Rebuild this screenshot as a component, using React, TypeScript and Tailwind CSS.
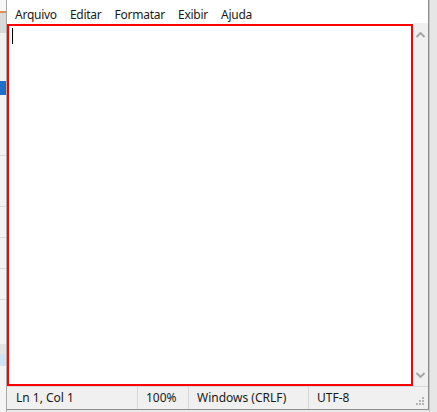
import React from "react";

const font = { fontFamily: '"Noto Sans", "Open Sans", sans-serif' };

function Grip() {
  const dots = [
    [6, 0],
    [3, 3],
    [6, 3],
    [0, 6],
    [3, 6],
    [6, 6],
  ];
  return (
    <svg width="9" height="9" viewBox="0 0 9 9" className="absolute right-[3px] bottom-[3px]">
      {dots.map(([x, y], i) => (
        <rect key={i} x={x} y={y} width="2" height="2" fill="#b4b4b4" />
      ))}
    </svg>
  );
}

function Chevron({ up }: { up: boolean }) {
  return (
    <svg width="9" height="6" viewBox="0 0 9 6">
      <path
        d={up ? "M0.5 5 L4.5 1 L8.5 5" : "M0.5 1 L4.5 5 L8.5 1"}
        fill="none"
        stroke="#a6a6a6"
        strokeWidth="2"
      />
    </svg>
  );
}

export default function App() {
  return (
    <div className="w-[437px] h-[412px] flex bg-[#e9e9e9] overflow-hidden text-[12px] text-[#1a1a1a]" style={font}>
      {/* background window strip on the left */}
      <div className="w-[7px] flex flex-col bg-[#f3f3f3] border-r border-[#a8a8a8]">
        <div className="h-[11px] bg-[#f7f7f7]" />
        <div className="h-[2px] bg-[#e8894f]" />
        <div className="h-[20px] bg-[#d9d9d9]" />
        <div className="h-[48px] bg-[#f1f1f1]" />
        <div className="h-[14px] bg-[#1e6fc9]" />
        <div className="h-[60px] bg-[#f4f4f4]" />
        <div className="h-[1px] bg-[#dcdcdc]" />
        <div className="h-[50px] bg-[#f4f4f4]" />
        <div className="h-[1px] bg-[#dcdcdc]" />
        <div className="h-[30px] bg-[#f4f4f4]" />
        <div className="h-[1px] bg-[#dcdcdc]" />
        <div className="h-[30px] bg-[#f4f4f4]" />
        <div className="h-[1px] bg-[#dcdcdc]" />
        <div className="h-[30px] bg-[#f4f4f4]" />
        <div className="h-[1px] bg-[#dcdcdc]" />
        <div className="h-[44px] bg-[#f4f4f4]" />
        <div className="h-[10px] bg-[#e4e4e4]" />
        <div className="h-[12px] bg-[#d2e3f3]" />
        <div className="flex-1 bg-[#f4f4f4]" />
      </div>

      {/* notepad window */}
      <div className="w-[422px] h-[410px] flex flex-col bg-white border-r border-b border-[#8c8c8c]">
        {/* menu bar */}
        <div className="h-[23px] flex items-start pt-[7px] pl-[1.5px] bg-white">
          {["Arquivo", "Editar", "Formatar", "Exibir", "Ajuda"].map((m) => (
            <span key={m} className="px-[6.5px] leading-[16px] tracking-[-0.25px]">
              {m}
            </span>
          ))}
        </div>

        {/* editor + scrollbar */}
        <div className="flex-1 flex min-h-0">
          <div className="w-[406px] flex flex-col pt-[1px] bg-white">
            <div className="flex-1 border-2 border-[#ff0000] relative">
              <div className="absolute left-[3px] top-[2px] w-[1px] h-[16px] bg-black" />
            </div>
          </div>
          <div className="w-[15px] bg-[#f0f0f0] flex flex-col items-center justify-between pt-[9px] pb-[8px]">
            <Chevron up />
            <Chevron up={false} />
          </div>
        </div>

        {/* status bar */}
        <div className="h-[23px] flex items-center bg-[#f0f0f0] border-t border-[#d9d9d9] relative">
          <div className="w-[130px] pl-[9px] h-full flex items-center">Ln 1, Col 1</div>
          <div className="w-[51px] pl-[8px] h-full flex items-center border-l border-[#d7d7d7]">100%</div>
          <div className="w-[120px] pl-[8px] h-full flex items-center border-l border-[#d7d7d7]">Windows (CRLF)</div>
          <div className="flex-1 pl-[8px] h-full flex items-center border-l border-[#d7d7d7]">UTF-8</div>
          <Grip />
        </div>
      </div>

      {/* background on the right */}
      <div className="flex-1 bg-[#e6e6e6] border-l border-[#c4c4c4]" />
    </div>
  );
}
